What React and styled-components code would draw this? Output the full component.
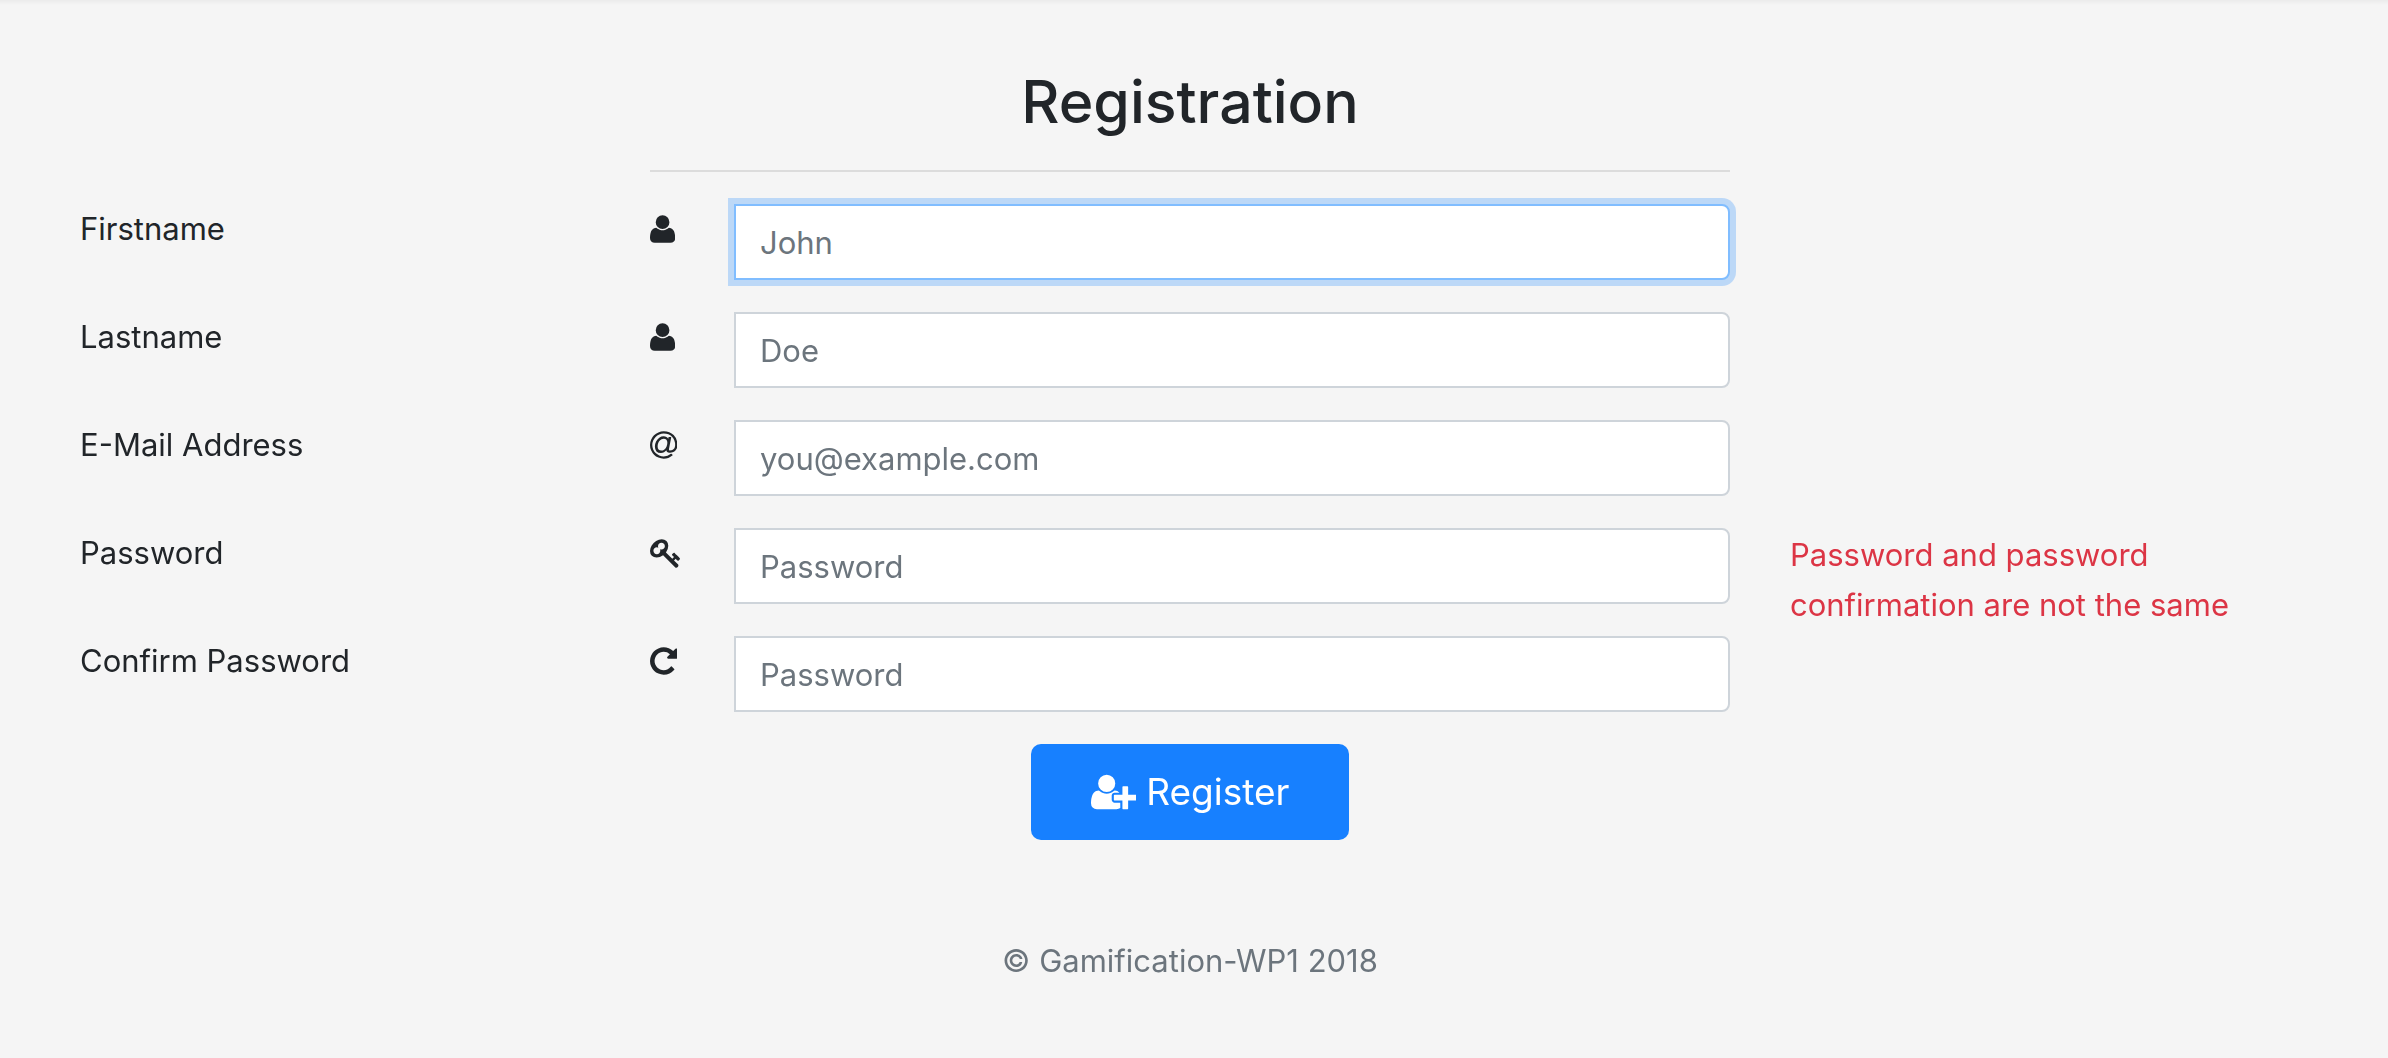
import React from "react";
import styled, { createGlobalStyle } from "styled-components";

const GlobalStyle = createGlobalStyle`
  *, *::before, *::after { box-sizing: border-box; }
  body {
    margin: 0;
    background: #f5f5f5;
    color: #212529;
    font-family: Inter, "Liberation Sans", sans-serif;
    font-size: 31px;
    line-height: 50px;
  }
`;

const Page = styled.div`
  min-height: 100vh;
  padding: 64px 8px 48px 0;
  box-shadow: inset 0 6px 4px -4px rgba(0, 0, 0, 0.05);
`;

const Container = styled.main`
  width: 100%;
  max-width: 2280px;
  margin: 0 auto;
`;

const Row = styled.div`
  display: grid;
  grid-template-columns: 1fr 2fr 1fr;
`;

const Column = styled.div`
  padding: 0 30px;
  grid-column: ${(p) => p.$column || "auto"};
`;

const Title = styled.h2`
  margin: 0 0 30px;
  font-size: 59px;
  font-weight: 500;
  line-height: 76px;
  text-align: center;
`;

const Divider = styled.hr`
  margin: 0 0 32px;
  border: 0;
  border-top: 2px solid #dcdcdc;
`;

const Label = styled.label`
  display: block;
`;

const InputGroup = styled.div`
  display: flex;
  align-items: flex-start;
  margin-bottom: 32px;
`;

const Addon = styled.span`
  display: flex;
  align-items: center;
  flex: 0 0 84px;
  height: 50px;
`;

const Glyph = styled.svg`
  display: block;
  height: ${(p) => p.$size}px;
  width: auto;
  fill: currentColor;
`;

const Input = styled.input`
  flex: 1;
  min-width: 0;
  height: 76px;
  padding: 12px 24px;
  border: 2px solid #ced4da;
  border-radius: 0 8px 8px 0;
  background: #fff;
  color: #495057;
  font: inherit;
  caret-color: transparent;

  &::placeholder {
    color: #6c757d;
    opacity: 1;
  }

  &:focus {
    border-color: #80bdff;
    outline: 0;
    box-shadow: 0 0 0 6px rgba(0, 123, 255, 0.23);
  }
`;

const ErrorText = styled.div`
  padding-top: 2px;
  color: #dc3545;
`;

const Actions = styled.div`
  display: flex;
  justify-content: center;
`;

const Button = styled.button`
  display: flex;
  align-items: center;
  justify-content: center;
  gap: 10px;
  height: 96px;
  padding: 0 60px;
  border: 0;
  border-radius: 10px;
  background: #1780ff;
  color: #fff;
  font: inherit;
  font-size: 37px;
  cursor: pointer;
`;

const Footer = styled.footer`
  margin-top: 96px;
  color: #6c757d;
  text-align: center;
`;

const glyphs = {
  user: {
    width: 1408,
    path: "M1408 131q0 -120 -73 -189.5t-194 -69.5h-874q-121 0 -194 69.5t-73 189.5q0 53 3.5 103.5t14 109t26.5 108.5t43 97.5t62 81t85.5 53.5t111.5 20q9 0 42 -21.5t74.5 -48t108 -48t133.5 -21.5t133.5 21.5t108 48t74.5 48t42 21.5q61 0 111.5 -20t85.5 -53.5t62 -81t43 -97.5t26.5 -108.5t14 -109t3.5 -103.5zM1088 1024q0 -159 -112.5 -271.5t-271.5 -112.5t-271.5 112.5t-112.5 271.5t112.5 271.5t271.5 112.5t271.5 -112.5t112.5 -271.5z",
  },
  at: {
    width: 1536,
    path: "M972 761q0 108 -53.5 169t-147.5 61q-63 0 -124 -30.5t-110 -84.5t-79.5 -137t-30.5 -180q0 -112 53.5 -173t150.5 -61q96 0 176 66.5t122.5 166t42.5 203.5zM1536 640q0 -111 -37 -197t-98.5 -135t-131.5 -74.5t-145 -27.5q-6 0 -15.5 -0.5t-16.5 -0.5q-95 0 -142 53q-28 33 -33 83q-52 -66 -131.5 -110t-173.5 -44q-161 0 -249.5 95.5t-88.5 269.5q0 157 66 290t179 210.5t246 77.5q87 0 155 -35.5t106 -99.5l2 19l11 56q1 6 5.5 12t9.5 6h118q5 0 13 -11q5 -5 3 -16l-120 -614q-5 -24 -5 -48q0 -39 12.5 -52t44.5 -13q28 1 57 5.5t73 24t77 50t57 89.5t24 137q0 292 -174 466t-466 174q-130 0 -248.5 -51t-204 -136.5t-136.5 -204t-51 -248.5t51 -248.5t136.5 -204t204 -136.5t248.5 -51q228 0 405 144q11 9 24 8t21 -12l41 -49q8 -12 7 -24q-2 -13 -12 -22q-102 -83 -227.5 -128t-258.5 -45q-156 0 -298 61t-245 164t-164 245t-61 298t61 298t164 245t245 164t298 61q344 0 556 -212t212 -556z",
  },
  key: {
    width: 1792,
    path: "M832 1024q0 80 -56 136t-136 56t-136 -56t-56 -136q0 -42 19 -83q-41 19 -83 19q-80 0 -136 -56t-56 -136t56 -136t136 -56t136 56t56 136q0 42 -19 83q41 -19 83 -19q80 0 136 56t56 136zM1683 320q0 -17 -49 -66t-66 -49q-9 0 -28.5 16t-36.5 33t-38.5 40t-24.5 26l-96 -96l220 -220q28 -28 28 -68q0 -42 -39 -81t-81 -39q-40 0 -68 28l-671 671q-176 -131 -365 -131q-163 0 -265.5 102.5t-102.5 265.5q0 160 95 313t248 248t313 95q163 0 265.5 -102.5t102.5 -265.5q0 -189 -131 -365l355 -355l96 96q-3 3 -26 24.5t-40 38.5t-33 36.5t-16 28.5q0 17 49 66t66 49q13 0 23 -10q6 -6 46 -44.5t82 -79.5t86.5 -86t73 -78t28.5 -41z",
  },
  repeat: {
    width: 1536,
    path: "M1536 1280v-448q0 -26 -19 -45t-45 -19h-448q-42 0 -59 40q-17 39 14 69l138 138q-148 137 -349 137q-104 0 -198.5 -40.5t-163.5 -109.5t-109.5 -163.5t-40.5 -198.5t40.5 -198.5t109.5 -163.5t163.5 -109.5t198.5 -40.5q119 0 225 52t179 147q7 10 23 12q15 0 25 -9l137 -138q9 -8 9.5 -20.5t-7.5 -22.5q-109 -132 -264 -204.5t-327 -72.5q-156 0 -298 61t-245 164t-164 245t-61 298t61 298t164 245t245 164t298 61q147 0 284.5 -55.5t244.5 -156.5l130 129q29 31 70 14q39 -17 39 -59z",
  },
  userPlus: {
    width: 2048,
    path: "M704 640q-159 0 -271.5 112.5t-112.5 271.5t112.5 271.5t271.5 112.5t271.5 -112.5t112.5 -271.5t-112.5 -271.5t-271.5 -112.5zM1664 512h352q13 0 22.5 -9.5t9.5 -22.5v-192q0 -13 -9.5 -22.5t-22.5 -9.5h-352v-352q0 -13 -9.5 -22.5t-22.5 -9.5h-192q-13 0 -22.5 9.5t-9.5 22.5v352h-352q-13 0 -22.5 9.5t-9.5 22.5v192q0 13 9.5 22.5t22.5 9.5h352v352q0 13 9.5 22.5t22.5 9.5h192q13 0 22.5 -9.5t9.5 -22.5v-352zM928 288q0 -52 38 -90t90 -38h256v-238q-68 -50 -171 -50h-874q-121 0 -194 69t-73 190q0 53 3.5 103.5t14 109t26.5 108.5t43 97.5t62 81t85.5 53.5t111.5 20q19 0 39 -17q79 -61 154.5 -91.5t164.5 -30.5t164.5 30.5t154.5 91.5q20 17 39 17q132 0 217 -96h-223q-52 0 -90 -38t-38 -90v-192z",
  },
};

function Icon({ name, size = 32 }) {
  const { width, path } = glyphs[name];
  return (
    <Glyph $size={size} viewBox={`0 0 ${width} 1792`} aria-hidden="true">
      <path transform="translate(0 1536) scale(1 -1)" d={path} />
    </Glyph>
  );
}

const fields = [
  { id: "firstname", label: "Firstname", icon: "user", type: "text", placeholder: "John" },
  { id: "lastname", label: "Lastname", icon: "user", type: "text", placeholder: "Doe" },
  { id: "email", label: "E-Mail Address", icon: "at", type: "email", placeholder: "you@example.com" },
  {
    id: "password",
    label: "Password",
    icon: "key",
    type: "password",
    placeholder: "Password",
    error: "Password and password confirmation are not the same",
  },
  { id: "password-confirm", label: "Confirm Password", icon: "repeat", type: "password", placeholder: "Password" },
];

function Field({ id, label, icon, type, placeholder, error, autoFocus }) {
  return (
    <Row>
      <Column>
        <Label htmlFor={id}>{label}</Label>
      </Column>
      <Column>
        <InputGroup>
          <Addon>
            <Icon name={icon} />
          </Addon>
          <Input id={id} name={id} type={type} placeholder={placeholder} autoFocus={autoFocus} />
        </InputGroup>
      </Column>
      <Column>{error && <ErrorText role="alert">{error}</ErrorText>}</Column>
    </Row>
  );
}

export default function App() {
  return (
    <>
      <GlobalStyle />
      <Page>
        <Container>
          <form onSubmit={(e) => e.preventDefault()}>
            <Row>
              <Column $column="2">
                <Title>Registration</Title>
                <Divider />
              </Column>
            </Row>
            {fields.map((field, i) => (
              <Field key={field.id} {...field} autoFocus={i === 0} />
            ))}
            <Actions>
              <Button type="submit">
                <Icon name="userPlus" size={40} />
                Register
              </Button>
            </Actions>
          </form>
          <Footer>© Gamification-WP1 2018</Footer>
        </Container>
      </Page>
    </>
  );
}
